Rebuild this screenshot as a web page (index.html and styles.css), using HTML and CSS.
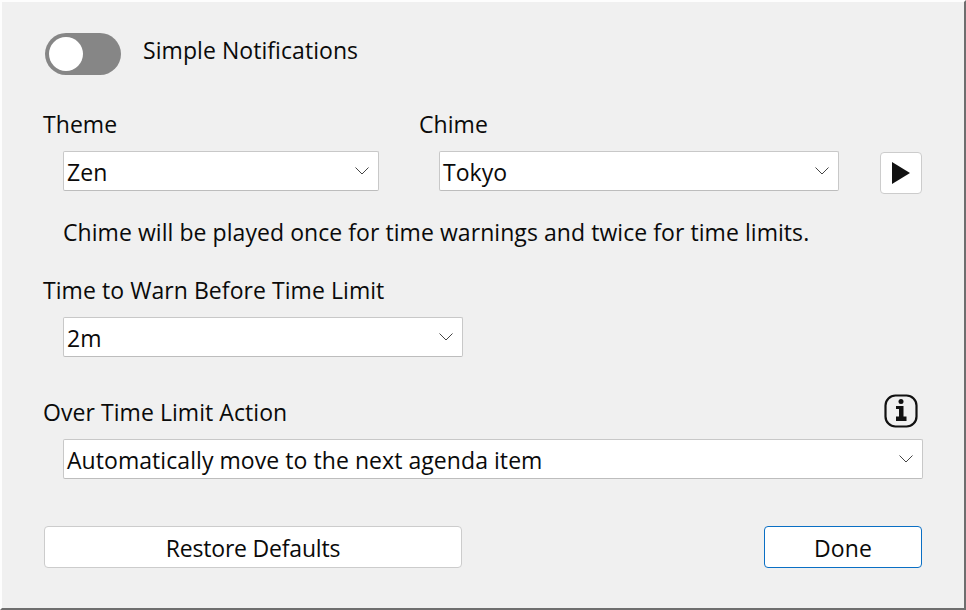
FILE: index.html
```html
<!DOCTYPE html>
<html lang="en">
<head>
<meta charset="utf-8">
<title>Notifications</title>
<link rel="stylesheet" href="styles.css">
</head>
<body>
<main class="window">
  <div class="toggle-row">
    <span class="toggle"><span class="knob"></span></span>
    <span class="text">Simple Notifications</span>
  </div>
  <div class="pick-row">
    <div class="theme-col">
      <div class="label">Theme</div>
      <div class="select theme-select"><span>Zen</span><svg class="chev" width="14" height="8" viewBox="0 0 14 8"><path d="M.5.5 7 7 13.500.5" fill="none" stroke="#444" stroke-width="1"/></svg></div>
    </div>
    <div class="chime-col">
      <div class="label">Chime</div>
      <div class="select chime-select"><span>Tokyo</span><svg class="chev" width="14" height="8" viewBox="0 0 14 8"><path d="M.5.5 7 7 13.500.5" fill="none" stroke="#444" stroke-width="1"/></svg></div>
    </div>
    <div class="play"><svg width="20" height="22" viewBox="0 0 20 22"><path d="M1 0 19 11 1 22Z" fill="#111"/></svg></div>
  </div>
  <p class="note">Chime will be played once for time warnings and twice for time limits.</p>
  <div class="label warn-label">Time to Warn Before Time Limit</div>
  <div class="select warn-select"><span>2m</span><svg class="chev" width="14" height="8" viewBox="0 0 14 8"><path d="M.5.5 7 7 13.500.5" fill="none" stroke="#444" stroke-width="1"/></svg></div>
  <div class="action-head">
    <div class="label">Over Time Limit Action</div>
    <svg class="info" width="34" height="34" viewBox="0 0 34 34"><rect x="1.500" y="1.500" width="31" height="31" rx="10" fill="none" stroke="#111" stroke-width="2.200"/><circle cx="17" cy="7.500" r="2.500" fill="#111"/><path d="M12 12h7.500v10.500H22.500V27H12v-4.500H15V15h-3Z" fill="#111"/></svg>
  </div>
  <div class="select action-select"><span>Automatically move to the next agenda item</span><svg class="chev" width="14" height="8" viewBox="0 0 14 8"><path d="M.5.5 7 7 13.500.5" fill="none" stroke="#444" stroke-width="1"/></svg></div>
  <div class="button-row">
    <div class="btn restore">Restore Defaults</div>
    <div class="btn done">Done</div>
  </div>
</main>
</body>
</html>
```
FILE: styles.css
```css
* { box-sizing: border-box; }
html, body { margin: 0; padding: 0; }
body { width: 966px; height: 610px; overflow: hidden; background: #f0f0f0; }
.window {
  width: 966px; height: 610px;
  padding: 31px 0 0 41px;
  background: #f0f0f0;
  border: 2px solid #fdfdfd;
  border-right-color: #6e6e6e;
  border-bottom-color: #6e6e6e;
  font: 23px/30px "Open Sans", sans-serif;
  letter-spacing: .06px;
  color: #0a0a0a;
}
.toggle-row { display: flex; align-items: center; margin-left: 2px; height: 42px; }
.toggle { width: 76px; height: 42px; border-radius: 21px; background: #868686; padding: 4px; display: block; }
.knob { display: block; width: 34px; height: 34px; border-radius: 50%; background: #fff; }
.text { margin: 0 0 8px 22px; }
.pick-row { display: flex; margin-top: 34px; height: 82px; }
.label { height: 32px; }
.theme-col { width: 376px; }
.chime-col { width: 420px; }
.select {
  display: flex; align-items: center; justify-content: space-between;
  height: 40px; margin: 10px 0 0 20px; padding: 0 9px 0 3px;
  background: #fff; border: 1px solid #c8c8c8; border-bottom-color: #bdbdbd; border-radius: 2px;
}
.select span { padding-top: 2px; }
.theme-select { width: 316px; }
.chime-select { width: 400px; }
.warn-select { width: 400px; }
.action-select { width: 860px; }
.chev { flex: none; }
.play {
  display: flex; align-items: center; justify-content: center;
  width: 42px; height: 42px; margin: 43px 0 0 41px;
  background: #fff; border: 1px solid #ccc; border-radius: 4px;
}
.note { margin: 0 0 0 20px; padding-top: 26px; height: 58px; }
.warn-label { margin-top: 26px; }
.action-head { display: flex; justify-content: space-between; align-items: center; width: 875px; height: 34px; margin-top: 37px; }
.action-head .label { margin-top: 4px; }
.action-select { margin-top: 11px; }
.button-row { display: flex; justify-content: space-between; width: 878px; margin: 47px 0 0 1px; }
.btn { height: 42px; padding-top: 1px; background: #fff; text-align: center; border: 1px solid #ccc; border-radius: 4px; line-height: 40px; }
.restore { width: 418px; letter-spacing: -.2px; }
.done { width: 158px; border-color: #0a6fc4; }
```
